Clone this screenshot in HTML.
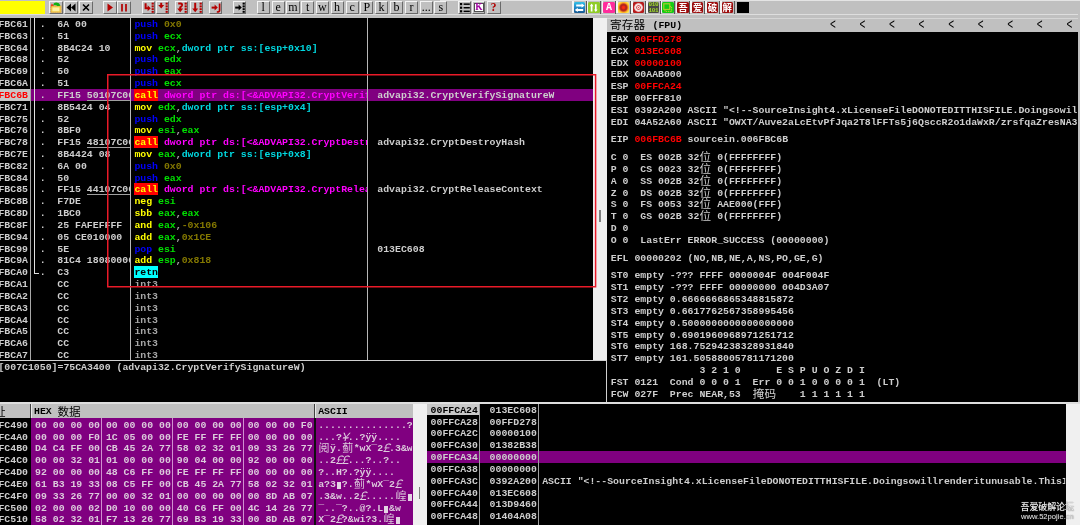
<!DOCTYPE html>
<html lang="zh"><head><meta charset="utf-8"><title>OllyDbg</title>
<style>
html,body{margin:0;padding:0;background:#c0c0c0;}
body{width:1080px;height:525px;position:relative;overflow:hidden;font-family:"Liberation Mono","Noto Sans CJK SC",monospace;}
.abs{position:absolute;}
.pane{position:absolute;background:#000;overflow:hidden;will-change:transform;}
.r{position:absolute;left:0;white-space:pre;height:12px;line-height:12px;font-size:9.853px;font-weight:bold;color:#cecece;}
.r span.c{position:absolute;top:0;height:12px;clip-path:inset(-3px 0 -3px 0);}
.r i{position:absolute;height:11.825px;display:block}
.cj{display:inline-block;width:11.824px;height:12px;line-height:9.5px;vertical-align:top;font-family:"Noto Sans CJK SC",sans-serif;font-weight:normal;font-size:11.6px;text-align:center;}
.hl{position:absolute;background:#800080;}
.vl{position:absolute;width:1px;background:#b8b8b8;}
.hz{position:absolute;height:1px;background:#c8c8c8;}
.b{color:#0000ff}.g{color:#00e000}.y{color:#ffff00}.o{color:#847800}.cy{color:#00d8e0}.m{color:#ff00ff}.gr{color:#a8a8a8}.rd{color:#ff0000}.w{color:#cecece}
.call{color:#ffff00}.retn{color:#000}
.u{border-bottom:1px solid #a0a0a0;display:inline-block;height:10.4px;line-height:12px;vertical-align:top}
.tb{position:absolute;top:1px;height:13px;width:13px;box-sizing:border-box;border:1px solid;border-color:#f4f4f4 #6a6a6a #6a6a6a #f4f4f4;background:#c0c0c0;text-align:center;font-family:"Liberation Serif",serif;font-size:12px;line-height:10.5px;color:#000;overflow:hidden;}
.ic{position:absolute;top:1.5px;height:11.6px;width:11.4px;overflow:hidden;border-radius:1.5px;}
</style></head><body>

<div class="abs" style="left:0;top:0;width:1080px;height:18px;will-change:transform">
<div class="abs" style="left:0;top:14.2px;width:1078px;height:1.1px;background:#dedede"></div>
<div class="abs" style="left:0;top:1px;width:44.5px;height:12.8px;background:#ffff00"></div>
<div class="abs" style="left:440px;top:0;width:640px;height:1px;background:#e4e4e4"></div>
<div class="tb" style="left:49.4px;width:13.4px"><svg width="12" height="11" viewBox="0 0 12 11" style="position:absolute;left:0;top:0"><rect x="0.8" y="3.8" width="10.4" height="6.8" fill="#f0c848" stroke="#d89030" stroke-width="0.8" stroke-dasharray="1 1"/><rect x="2.4" y="5.4" width="7" height="3.8" fill="#fff0a0"/><path d="M3.4 3.6 Q3 0.4 6.4 0.4 Q9.4 0.6 10.4 3.4 Q8 4.8 6.6 3.4 Q5 2.6 3.4 3.6Z" fill="#10b010"/><path d="M0.8 4.6 L1.6 1.6 L4 3.4 Z" fill="#f03818"/></svg></div>
<div class="tb" style="left:64.2px;width:13.4px"><svg width="12" height="11" viewBox="0 0 12 11" style="position:absolute;left:0;top:0"><path d="M6 1.5 L1.5 5.5 L6 9.5Z M10.5 1.5 L6 5.5 L10.5 9.5Z" fill="#000"/></svg></div>
<div class="tb" style="left:79.4px;width:13.4px"><svg width="12" height="11" viewBox="0 0 12 11" style="position:absolute;left:0;top:0"><path d="M3 2.5 L9 8.5 M9 2.5 L3 8.5" stroke="#000" stroke-width="1.6"/></svg></div>
<div class="tb" style="left:103.3px;width:13.4px"><svg width="12" height="11" viewBox="0 0 12 11" style="position:absolute;left:0;top:0"><path d="M3.5 1.5 L9 5.5 L3.5 9.5Z" fill="#b40000"/></svg></div>
<div class="tb" style="left:117.2px;width:13.4px"><svg width="12" height="11" viewBox="0 0 12 11" style="position:absolute;left:0;top:0"><path d="M4 2 V9.5 M8 2 V9.5" stroke="#b40000" stroke-width="1.7"/></svg></div>
<div class="tb" style="left:141.7px;width:13.4px"><svg width="12" height="11" viewBox="0 0 12 11" style="position:absolute;left:0;top:0"><path d="M2.6 1.2 V6.2 H5.5" stroke="#b40000" stroke-width="2" fill="none"/><path d="M4.6 3.2 L4.6 9.2 L7.8 6.2Z" fill="#b40000"/><g fill="#b40000"><rect x="8.6" y="0.6" width="2.2" height="2"/><rect x="8.6" y="3.4" width="2.2" height="2"/><rect x="8.6" y="6.2" width="2.2" height="2"/><rect x="8.6" y="9" width="2.2" height="1.8"/></g></svg></div>
<div class="tb" style="left:156.0px;width:13.4px"><svg width="12" height="11" viewBox="0 0 12 11" style="position:absolute;left:0;top:0"><path d="M4.2 0.8 V4" stroke="#b40000" stroke-width="2" fill="none"/><path d="M1.2 3 L7.2 3 L4.2 6.6Z" fill="#b40000"/><g fill="#b40000"><rect x="8.6" y="0.6" width="2.2" height="2"/><rect x="8.6" y="3.4" width="2.2" height="2"/><rect x="8.6" y="6.2" width="2.2" height="2"/><rect x="8.6" y="9" width="2.2" height="1.8"/></g></svg></div>
<div class="tb" style="left:175.0px;width:13.4px"><svg width="12" height="11" viewBox="0 0 12 11" style="position:absolute;left:0;top:0"><path d="M2.2 1.6 H4.6 Q6.2 1.6 6 3.2 Q5.6 4.6 4.2 5.4 V7.4" stroke="#b40000" stroke-width="2" fill="none"/><path d="M1.2 6.6 L7.2 6.6 L4.2 10.2Z" fill="#b40000"/><g fill="#b40000"><rect x="8.6" y="0.6" width="2.2" height="2"/><rect x="8.6" y="3.4" width="2.2" height="2"/><rect x="8.6" y="6.2" width="2.2" height="2"/><rect x="8.6" y="9" width="2.2" height="1.8"/></g></svg></div>
<div class="tb" style="left:190.0px;width:13.4px"><svg width="12" height="11" viewBox="0 0 12 11" style="position:absolute;left:0;top:0"><path d="M4.2 0.8 V7.4" stroke="#b40000" stroke-width="2" fill="none"/><path d="M1.2 6.6 L7.2 6.6 L4.2 10.2Z" fill="#b40000"/><g fill="#b40000"><rect x="8.6" y="0.6" width="2.2" height="2"/><rect x="8.6" y="3.4" width="2.2" height="2"/><rect x="8.6" y="6.2" width="2.2" height="2"/><rect x="8.6" y="9" width="2.2" height="1.8"/></g></svg></div>
<div class="tb" style="left:208.9px;width:13.4px"><svg width="12" height="11" viewBox="0 0 12 11" style="position:absolute;left:0;top:0"><path d="M1.6 5.6 H5.6" stroke="#b40000" stroke-width="2" fill="none"/><path d="M4.6 2.6 L4.6 8.6 L7.8 5.6Z" fill="#b40000"/><path d="M9.6 1.4 V8.4 Q9.6 10 6.8 10" stroke="#b40000" stroke-width="1.7" fill="none"/></svg></div>
<div class="tb" style="left:232.8px;width:13.4px"><svg width="12" height="11" viewBox="0 0 12 11" style="position:absolute;left:0;top:0"><path d="M1.2 5.6 H5.6" stroke="#000" stroke-width="2" fill="none"/><path d="M4.6 2.6 L4.6 8.6 L7.8 5.6Z" fill="#000"/><g fill="#000"><rect x="8.6" y="0.6" width="2.2" height="2"/><rect x="8.6" y="3.4" width="2.2" height="2"/><rect x="8.6" y="6.2" width="2.2" height="2"/><rect x="8.6" y="9" width="2.2" height="1.8"/></g></svg></div>
<div class="tb" style="left:256.7px;width:13.2px">l</div>
<div class="tb" style="left:271.6px;width:13.2px">e</div>
<div class="tb" style="left:286.4px;width:13.2px">m</div>
<div class="tb" style="left:301.0px;width:13.2px">t</div>
<div class="tb" style="left:315.7px;width:13.2px">w</div>
<div class="tb" style="left:330.5px;width:13.2px">h</div>
<div class="tb" style="left:345.6px;width:13.2px">c</div>
<div class="tb" style="left:360.3px;width:13.2px">P</div>
<div class="tb" style="left:375.0px;width:13.2px">k</div>
<div class="tb" style="left:390.0px;width:13.2px">b</div>
<div class="tb" style="left:404.8px;width:13.2px">r</div>
<div class="tb" style="left:419.6px;width:13.2px">...</div>
<div class="tb" style="left:434.3px;width:13.2px">s</div>
<div class="tb" style="left:458.0px;width:13.0px"><svg width="12" height="11" viewBox="0 0 12 11" style="position:absolute;left:0;top:0"><g fill="#000"><rect x="1" y="1" width="2.2" height="2.2"/><rect x="1" y="4.6" width="2.2" height="2.2"/><rect x="1" y="8.2" width="2.2" height="2.2"/><rect x="4.6" y="1.4" width="6.2" height="1.5"/><rect x="4.6" y="5" width="6.2" height="1.5"/><rect x="4.6" y="8.6" width="6.2" height="1.5"/></g></svg></div>
<div class="tb" style="left:472.2px;width:13px"><div style="position:absolute;left:0.4px;top:1.2px;width:10.6px;height:8.8px;box-sizing:border-box;border:1px solid #505050;background:#fff;font:bold 9.5px/6.4px 'Liberation Serif',serif;color:#a000a0;text-align:center">K</div></div>
<div class="tb" style="left:486.6px;width:14px;font-weight:bold;font-size:11.5px;line-height:11.5px;color:#b00000">?</div>
<div class="abs" style="left:572.0px;top:1.4px;width:1.6px;height:11.8px;background:#f4f4f4"></div>
<div class="ic" style="left:573.6px;background:linear-gradient(#30c0e8,#2088c8 50%,#185890)"><svg width="11.4" height="11.6" viewBox="0 0 11.4 11.6" style="position:absolute;left:0;top:0"><path d="M2.2 3.6 H8.6 M2.8 7.9 H9.2" stroke="#fff" stroke-width="2"/><path d="M7.6 1.4 L10.6 3.6 L7.6 5.8Z M3.8 5.7 L0.8 7.9 L3.8 10.1Z" fill="#fff"/></svg></div>
<div class="abs" style="left:585.6px;top:1.2px;width:1px;height:12.4px;background:#585858"></div>
<div class="abs" style="left:586.8px;top:1.4px;width:1.6px;height:11.8px;background:#f4f4f4"></div>
<div class="ic" style="left:588.4px;background:#90cc28"><svg width="11.4" height="11.6" viewBox="0 0 11.4 11.6" style="position:absolute;left:0;top:0"><path d="M3.6 2.8 V9.4 M7.8 2.2 V8.8" stroke="#fff" stroke-width="1.7"/><path d="M1.8 4.2 L3.6 1.6 L5.4 4.2Z M6 7.4 L7.8 10 L9.6 7.4Z" fill="#fff"/></svg></div>
<div class="abs" style="left:600.4px;top:1.2px;width:1px;height:12.4px;background:#585858"></div>
<div class="abs" style="left:601.6px;top:1.4px;width:1.6px;height:11.8px;background:#f4f4f4"></div>
<div class="ic" style="left:603.2px;background:#ff2c9c"><span style="position:absolute;left:0;width:11.4px;top:0;text-align:center;font:bold 10px/11.8px 'Liberation Mono',monospace;color:#fff">A</span></div>
<div class="abs" style="left:615.2px;top:1.2px;width:1px;height:12.4px;background:#585858"></div>
<div class="abs" style="left:616.4px;top:1.4px;width:1.6px;height:11.8px;background:#f4f4f4"></div>
<div class="ic" style="left:618.0px;background:radial-gradient(circle at 50% 50%,#ff3010 0,#f02810 18%,#a82020 34%,#c03820 46%,#f8a020 60%,#ffe040 78%,#fff080 100%)"></div>
<div class="abs" style="left:630.0px;top:1.2px;width:1px;height:12.4px;background:#585858"></div>
<div class="abs" style="left:631.2px;top:1.4px;width:1.6px;height:11.8px;background:#f4f4f4"></div>
<div class="ic" style="left:632.8px;background:radial-gradient(circle at 50% 50%,#e05050 0,#f8e0e0 14%,#d04040 24%,#f8e8e8 34%,#f0d0d0 50%,#c02020 60%,#a01010 100%)"></div>
<div class="abs" style="left:644.8px;top:1.2px;width:1px;height:12.4px;background:#585858"></div>
<div class="abs" style="left:646.0px;top:1.4px;width:1.6px;height:11.8px;background:#f4f4f4"></div>
<div class="ic" style="left:647.6px;background:#484844"><span style="position:absolute;left:0;width:11.4px;top:0.6px;text-align:center;font:bold 6px/5.4px 'Liberation Mono',monospace;color:#a0d828;letter-spacing:-0.4px">010<br>101</span></div>
<div class="abs" style="left:659.6px;top:1.2px;width:1px;height:12.4px;background:#585858"></div>
<div class="abs" style="left:660.8px;top:1.4px;width:1.6px;height:11.8px;background:#f4f4f4"></div>
<div class="ic" style="left:662.4px;background:#14cc14"><svg width="11.4" height="11.6" viewBox="0 0 11.4 11.6" style="position:absolute;left:0;top:0"><rect x="1.8" y="1.8" width="6" height="5.6" fill="none" stroke="#b8cc30" stroke-width="1.1"/><path d="M7.8 4.6 H9.6 V9.4 H3 V7.4" stroke="#b8cc30" stroke-width="1" fill="none" stroke-dasharray="1.4 0.8"/></svg></div>
<div class="abs" style="left:674.4px;top:1.2px;width:1px;height:12.4px;background:#585858"></div>
<div class="abs" style="left:675.6px;top:1.4px;width:1.6px;height:11.8px;background:#f4f4f4"></div>
<div class="ic" style="left:677.2px;background:#9c0c0c"><span style="position:absolute;left:0;width:11.4px;top:0;text-align:center;font:bold 9.4px/11.4px 'Noto Sans CJK SC',sans-serif;color:#fff">吾</span></div>
<div class="abs" style="left:689.2px;top:1.2px;width:1px;height:12.4px;background:#585858"></div>
<div class="abs" style="left:690.4px;top:1.4px;width:1.6px;height:11.8px;background:#f4f4f4"></div>
<div class="ic" style="left:692.0px;background:#9c0c0c"><span style="position:absolute;left:0;width:11.4px;top:0;text-align:center;font:bold 9.4px/11.4px 'Noto Sans CJK SC',sans-serif;color:#fff">爱</span></div>
<div class="abs" style="left:704.0px;top:1.2px;width:1px;height:12.4px;background:#585858"></div>
<div class="abs" style="left:705.2px;top:1.4px;width:1.6px;height:11.8px;background:#f4f4f4"></div>
<div class="ic" style="left:706.8px;background:#9c0c0c"><span style="position:absolute;left:0;width:11.4px;top:0;text-align:center;font:bold 9.4px/11.4px 'Noto Sans CJK SC',sans-serif;color:#fff">破</span></div>
<div class="abs" style="left:718.8px;top:1.2px;width:1px;height:12.4px;background:#585858"></div>
<div class="abs" style="left:720.0px;top:1.4px;width:1.6px;height:11.8px;background:#f4f4f4"></div>
<div class="ic" style="left:721.6px;background:#9c0c0c"><span style="position:absolute;left:0;width:11.4px;top:0;text-align:center;font:bold 9.4px/11.4px 'Noto Sans CJK SC',sans-serif;color:#fff">解</span></div>
<div class="abs" style="left:733.6px;top:1.2px;width:1px;height:12.4px;background:#585858"></div>
<div class="abs" style="left:736.8px;top:1.5px;width:12.2px;height:11.8px;background:#000"></div>
<div class="pane" style="left:0;top:18.0px;width:593px;height:342.0px">
<div class="hl" style="left:31px;top:70.75px;width:563px;height:11.92px"></div>
<div class="abs" style="left:0;top:70.75px;width:30px;height:11.92px;background:#c8c8c8"></div>
<div class="vl" style="left:30px;top:0;height:342.0px;background:#a8a8a8"></div>
<div class="vl" style="left:130px;top:0;height:342.0px"></div>
<div class="vl" style="left:367px;top:0;height:342.0px"></div>
<div class="vl" style="left:34px;top:0;height:255.1px;background:#e0e0e0"></div>
<div class="hz" style="left:34px;top:255.1px;width:5px;background:#e0e0e0"></div>
<div class="r" style="top:1px"><span class="c w" style="left:-1.60px">FBC61</span><span class="c" style="left:39.80px">.</span><span class="c" style="left:57.3px;width:72.7px">6A 00</span><span class="c" style="left:134.4px;width:232.6px"><span class="b">push </span><span class="o">0x0</span></span></div>
<div class="r" style="top:13px"><span class="c w" style="left:-1.60px">FBC63</span><span class="c" style="left:39.80px">.</span><span class="c" style="left:57.3px;width:72.7px">51</span><span class="c" style="left:134.4px;width:232.6px"><span class="b">push </span><span class="g">ecx</span></span></div>
<div class="r" style="top:25px"><span class="c w" style="left:-1.60px">FBC64</span><span class="c" style="left:39.80px">.</span><span class="c" style="left:57.3px;width:72.7px">8B4C24 10</span><span class="c" style="left:134.4px;width:232.6px"><span class="y">mov </span><span class="g">ecx</span><span class="gr">,</span><span class="cy">dword ptr ss:[esp+0x10]</span></span></div>
<div class="r" style="top:36px"><span class="c w" style="left:-1.60px">FBC68</span><span class="c" style="left:39.80px">.</span><span class="c" style="left:57.3px;width:72.7px">52</span><span class="c" style="left:134.4px;width:232.6px"><span class="b">push </span><span class="g">edx</span></span></div>
<div class="r" style="top:48px"><span class="c w" style="left:-1.60px">FBC69</span><span class="c" style="left:39.80px">.</span><span class="c" style="left:57.3px;width:72.7px">50</span><span class="c" style="left:134.4px;width:232.6px"><span class="b">push </span><span class="g">eax</span></span></div>
<div class="r" style="top:60px"><span class="c w" style="left:-1.60px">FBC6A</span><span class="c" style="left:39.80px">.</span><span class="c" style="left:57.3px;width:72.7px">51</span><span class="c" style="left:134.4px;width:232.6px"><span class="b">push </span><span class="g">ecx</span></span></div>
<div class="r" style="top:72px"><span class="c rd" style="left:-1.60px">FBC6B</span><span class="c" style="left:39.80px">.</span><span class="c" style="left:57.3px;width:72.7px">FF15 <span class="u">50107C00</span></span><i style="left:134px;top:-1.25px;width:23.65px;background:#ff0000"></i><span class="c" style="left:134.4px;width:232.6px"><span class="call">call</span><span class="m"> dword ptr ds:[&lt;&amp;ADVAPI32.CryptVerifySignatureW&gt;]</span></span><span class="c" style="left:377.3px">advapi32.CryptVerifySignatureW</span></div>
<div class="r" style="top:84px"><span class="c w" style="left:-1.60px">FBC71</span><span class="c" style="left:39.80px">.</span><span class="c" style="left:57.3px;width:72.7px">8B5424 04</span><span class="c" style="left:134.4px;width:232.6px"><span class="y">mov </span><span class="g">edx</span><span class="gr">,</span><span class="cy">dword ptr ss:[esp+0x4]</span></span></div>
<div class="r" style="top:96px"><span class="c w" style="left:-1.60px">FBC75</span><span class="c" style="left:39.80px">.</span><span class="c" style="left:57.3px;width:72.7px">52</span><span class="c" style="left:134.4px;width:232.6px"><span class="b">push </span><span class="g">edx</span></span></div>
<div class="r" style="top:107px"><span class="c w" style="left:-1.60px">FBC76</span><span class="c" style="left:39.80px">.</span><span class="c" style="left:57.3px;width:72.7px">8BF0</span><span class="c" style="left:134.4px;width:232.6px"><span class="y">mov </span><span class="g">esi</span><span class="gr">,</span><span class="g">eax</span></span></div>
<div class="r" style="top:119px"><span class="c w" style="left:-1.60px">FBC78</span><span class="c" style="left:39.80px">.</span><span class="c" style="left:57.3px;width:72.7px">FF15 <span class="u">48107C00</span></span><i style="left:134px;top:-0.95px;width:23.65px;background:#ff0000"></i><span class="c" style="left:134.4px;width:232.6px"><span class="call">call</span><span class="m"> dword ptr ds:[&lt;&amp;ADVAPI32.CryptDestroyHash&gt;]</span></span><span class="c" style="left:377.3px">advapi32.CryptDestroyHash</span></div>
<div class="r" style="top:131px"><span class="c w" style="left:-1.60px">FBC7E</span><span class="c" style="left:39.80px">.</span><span class="c" style="left:57.3px;width:72.7px">8B4424 08</span><span class="c" style="left:134.4px;width:232.6px"><span class="y">mov </span><span class="g">eax</span><span class="gr">,</span><span class="cy">dword ptr ss:[esp+0x8]</span></span></div>
<div class="r" style="top:143px"><span class="c w" style="left:-1.60px">FBC82</span><span class="c" style="left:39.80px">.</span><span class="c" style="left:57.3px;width:72.7px">6A 00</span><span class="c" style="left:134.4px;width:232.6px"><span class="b">push </span><span class="o">0x0</span></span></div>
<div class="r" style="top:155px"><span class="c w" style="left:-1.60px">FBC84</span><span class="c" style="left:39.80px">.</span><span class="c" style="left:57.3px;width:72.7px">50</span><span class="c" style="left:134.4px;width:232.6px"><span class="b">push </span><span class="g">eax</span></span></div>
<div class="r" style="top:166px"><span class="c w" style="left:-1.60px">FBC85</span><span class="c" style="left:39.80px">.</span><span class="c" style="left:57.3px;width:72.7px">FF15 <span class="u">44107C00</span></span><i style="left:134px;top:-0.65px;width:23.65px;background:#ff0000"></i><span class="c" style="left:134.4px;width:232.6px"><span class="call">call</span><span class="m"> dword ptr ds:[&lt;&amp;ADVAPI32.CryptReleaseContext&gt;]</span></span><span class="c" style="left:377.3px">advapi32.CryptReleaseContext</span></div>
<div class="r" style="top:178px"><span class="c w" style="left:-1.60px">FBC8B</span><span class="c" style="left:39.80px">.</span><span class="c" style="left:57.3px;width:72.7px">F7DE</span><span class="c" style="left:134.4px;width:232.6px"><span class="y">neg </span><span class="g">esi</span></span></div>
<div class="r" style="top:190px"><span class="c w" style="left:-1.60px">FBC8D</span><span class="c" style="left:39.80px">.</span><span class="c" style="left:57.3px;width:72.7px">1BC0</span><span class="c" style="left:134.4px;width:232.6px"><span class="y">sbb </span><span class="g">eax</span><span class="gr">,</span><span class="g">eax</span></span></div>
<div class="r" style="top:202px"><span class="c w" style="left:-1.60px">FBC8F</span><span class="c" style="left:39.80px">.</span><span class="c" style="left:57.3px;width:72.7px">25 FAFEFFFF</span><span class="c" style="left:134.4px;width:232.6px"><span class="y">and </span><span class="g">eax</span><span class="gr">,</span><span class="o">-0x106</span></span></div>
<div class="r" style="top:214px"><span class="c w" style="left:-1.60px">FBC94</span><span class="c" style="left:39.80px">.</span><span class="c" style="left:57.3px;width:72.7px">05 CE010000</span><span class="c" style="left:134.4px;width:232.6px"><span class="y">add </span><span class="g">eax</span><span class="gr">,</span><span class="o">0x1CE</span></span></div>
<div class="r" style="top:226px"><span class="c w" style="left:-1.60px">FBC99</span><span class="c" style="left:39.80px">.</span><span class="c" style="left:57.3px;width:72.7px">5E</span><span class="c" style="left:134.4px;width:232.6px"><span class="b">pop </span><span class="g">esi</span></span><span class="c" style="left:377.3px">013EC608</span></div>
<div class="r" style="top:237px"><span class="c w" style="left:-1.60px">FBC9A</span><span class="c" style="left:39.80px">.</span><span class="c" style="left:57.3px;width:72.7px">81C4 18080000</span><span class="c" style="left:134.4px;width:232.6px"><span class="y">add </span><span class="g">esp</span><span class="gr">,</span><span class="o">0x818</span></span></div>
<div class="r" style="top:249px"><span class="c w" style="left:-1.60px">FBCA0</span><span class="c" style="left:39.80px">.</span><span class="c" style="left:57.3px;width:72.7px">C3</span><i style="left:134px;top:-0.88px;width:23.65px;background:#00ffff"></i><span class="c" style="left:134.4px;width:232.6px"><span class="retn">retn</span></span></div>
<div class="r" style="top:261px"><span class="c w" style="left:-1.60px">FBCA1</span><span class="c" style="left:57.3px;width:72.7px">CC</span><span class="c" style="left:134.4px;width:232.6px"><span class="gr">int3</span></span></div>
<div class="r" style="top:273px"><span class="c w" style="left:-1.60px">FBCA2</span><span class="c" style="left:57.3px;width:72.7px">CC</span><span class="c" style="left:134.4px;width:232.6px"><span class="gr">int3</span></span></div>
<div class="r" style="top:285px"><span class="c w" style="left:-1.60px">FBCA3</span><span class="c" style="left:57.3px;width:72.7px">CC</span><span class="c" style="left:134.4px;width:232.6px"><span class="gr">int3</span></span></div>
<div class="r" style="top:297px"><span class="c w" style="left:-1.60px">FBCA4</span><span class="c" style="left:57.3px;width:72.7px">CC</span><span class="c" style="left:134.4px;width:232.6px"><span class="gr">int3</span></span></div>
<div class="r" style="top:308px"><span class="c w" style="left:-1.60px">FBCA5</span><span class="c" style="left:57.3px;width:72.7px">CC</span><span class="c" style="left:134.4px;width:232.6px"><span class="gr">int3</span></span></div>
<div class="r" style="top:320px"><span class="c w" style="left:-1.60px">FBCA6</span><span class="c" style="left:57.3px;width:72.7px">CC</span><span class="c" style="left:134.4px;width:232.6px"><span class="gr">int3</span></span></div>
<div class="r" style="top:332px"><span class="c w" style="left:-1.60px">FBCA7</span><span class="c" style="left:57.3px;width:72.7px">CC</span><span class="c" style="left:134.4px;width:232.6px"><span class="gr">int3</span></span></div>
</div>
<div class="abs" style="left:593px;top:18px;width:14px;height:342px;background:#f0f0f0"></div>
<div class="abs" style="left:599.4px;top:209.5px;width:1.6px;height:12px;background:#808080"></div>
<svg class="abs" style="left:0;top:0;will-change:transform;pointer-events:none" width="620" height="300" viewBox="0 0 620 300"><rect x="107.75" y="74.75" width="487.85" height="212" fill="none" stroke="#ea1a28" stroke-width="1.5"/></svg>
<div class="pane" style="left:0;top:360px;width:606.4px;height:43px">
<div class="hz" style="left:0;top:0;width:607px;background:#d0d0d0"></div>
<div class="r" style="top:2px"><span class="c" style="left:-1.6px">[007C1050]=75CA3400 (advapi32.CryptVerifySignatureW)</span></div>
</div>
<div class="vl" style="left:606.3px;top:360px;height:43px;background:#d0d0d0"></div>
<div class="pane" style="left:607.0px;top:18.0px;width:471px;height:385px">
<div class="abs" style="left:0;top:0;width:471px;height:13.7px;background:#c0c0c0"></div>
<div class="abs" style="left:0;top:0;width:471px;height:1px;background:#d6d6d6"></div>
<div class="r" style="top:2px;color:#000"><span class="c" style="left:3px;top:-1.6px;height:14px;font:normal 11.6px/12.5px 'Noto Sans CJK SC',sans-serif;letter-spacing:0.1px">寄存器</span><span class="c" style="left:45.5px">(FPU)</span><span class="c" style="left:222.90px;font-weight:normal;transform:translateY(1px) scaleY(1.55);transform-origin:50% 62%;overflow:visible">&lt;</span><span class="c" style="left:252.46px;font-weight:normal;transform:translateY(1px) scaleY(1.55);transform-origin:50% 62%;overflow:visible">&lt;</span><span class="c" style="left:282.02px;font-weight:normal;transform:translateY(1px) scaleY(1.55);transform-origin:50% 62%;overflow:visible">&lt;</span><span class="c" style="left:311.58px;font-weight:normal;transform:translateY(1px) scaleY(1.55);transform-origin:50% 62%;overflow:visible">&lt;</span><span class="c" style="left:341.14px;font-weight:normal;transform:translateY(1px) scaleY(1.55);transform-origin:50% 62%;overflow:visible">&lt;</span><span class="c" style="left:370.70px;font-weight:normal;transform:translateY(1px) scaleY(1.55);transform-origin:50% 62%;overflow:visible">&lt;</span><span class="c" style="left:400.26px;font-weight:normal;transform:translateY(1px) scaleY(1.55);transform-origin:50% 62%;overflow:visible">&lt;</span><span class="c" style="left:429.82px;font-weight:normal;transform:translateY(1px) scaleY(1.55);transform-origin:50% 62%;overflow:visible">&lt;</span><span class="c" style="left:459.38px;font-weight:normal;transform:translateY(1px) scaleY(1.55);transform-origin:50% 62%;overflow:visible">&lt;</span></div>
<div class="r" style="top:16px"><span class="c" style="left:3.8px;width:467px">EAX <span class="rd">00FFD278</span></span></div>
<div class="r" style="top:28px"><span class="c" style="left:3.8px;width:467px">ECX <span class="rd">013EC608</span></span></div>
<div class="r" style="top:40px"><span class="c" style="left:3.8px;width:467px">EDX <span class="rd">00000100</span></span></div>
<div class="r" style="top:51px"><span class="c" style="left:3.8px;width:467px">EBX 00AAB000</span></div>
<div class="r" style="top:63px"><span class="c" style="left:3.8px;width:467px">ESP <span class="rd">00FFCA24</span></span></div>
<div class="r" style="top:75px"><span class="c" style="left:3.8px;width:467px">EBP 00FFF810</span></div>
<div class="r" style="top:87px"><span class="c" style="left:3.8px;width:467px">ESI 0392A200 ASCII "&lt;!--SourceInsight4.xLicenseFileDONOTEDITTHISFILE.Doingsowillrenderitunusable.</span></div>
<div class="r" style="top:99px"><span class="c" style="left:3.8px;width:467px">EDI 04A52A60 ASCII "OWXT/Auve2aLcEtvPfJqa2T8lFFTs5j6QsccR2o1daWxR/zrsfqaZresNA3kL9</span></div>
<div class="r" style="top:116px"><span class="c" style="left:3.8px;width:467px">EIP <span class="rd">006FBC6B</span> sourcein.006FBC6B</span></div>
<div class="r" style="top:134px"><span class="c" style="left:3.8px;width:467px">C 0  ES 002B 32<span class="cj">位</span> 0(FFFFFFFF)</span></div>
<div class="r" style="top:146px"><span class="c" style="left:3.8px;width:467px">P 0  CS 0023 32<span class="cj">位</span> 0(FFFFFFFF)</span></div>
<div class="r" style="top:158px"><span class="c" style="left:3.8px;width:467px">A 0  SS 002B 32<span class="cj">位</span> 0(FFFFFFFF)</span></div>
<div class="r" style="top:170px"><span class="c" style="left:3.8px;width:467px">Z 0  DS 002B 32<span class="cj">位</span> 0(FFFFFFFF)</span></div>
<div class="r" style="top:181px"><span class="c" style="left:3.8px;width:467px">S 0  FS 0053 32<span class="cj">位</span> AAE000(FFF)</span></div>
<div class="r" style="top:193px"><span class="c" style="left:3.8px;width:467px">T 0  GS 002B 32<span class="cj">位</span> 0(FFFFFFFF)</span></div>
<div class="r" style="top:205px"><span class="c" style="left:3.8px;width:467px">D 0</span></div>
<div class="r" style="top:217px"><span class="c" style="left:3.8px;width:467px">O 0  LastErr ERROR_SUCCESS (00000000)</span></div>
<div class="r" style="top:235px"><span class="c" style="left:3.8px;width:467px">EFL 00000202 (NO,NB,NE,A,NS,PO,GE,G)</span></div>
<div class="r" style="top:252px"><span class="c" style="left:3.8px;width:467px">ST0 empty -??? FFFF 0000004F 004F004F</span></div>
<div class="r" style="top:264px"><span class="c" style="left:3.8px;width:467px">ST1 empty -??? FFFF 00000000 004D3A07</span></div>
<div class="r" style="top:276px"><span class="c" style="left:3.8px;width:467px">ST2 empty 0.6666666865348815872</span></div>
<div class="r" style="top:288px"><span class="c" style="left:3.8px;width:467px">ST3 empty 0.6617762567358995456</span></div>
<div class="r" style="top:300px"><span class="c" style="left:3.8px;width:467px">ST4 empty 0.5000000000000000000</span></div>
<div class="r" style="top:312px"><span class="c" style="left:3.8px;width:467px">ST5 empty 0.6901960968971251712</span></div>
<div class="r" style="top:323px"><span class="c" style="left:3.8px;width:467px">ST6 empty 168.75294238328931840</span></div>
<div class="r" style="top:335px"><span class="c" style="left:3.8px;width:467px">ST7 empty 161.50588005781171200</span></div>
<div class="r" style="top:347px"><span class="c" style="left:3.8px;width:467px">               3 2 1 0      E S P U O Z D I</span></div>
<div class="r" style="top:359px"><span class="c" style="left:3.8px;width:467px">FST 0121  Cond 0 0 0 1  Err 0 0 1 0 0 0 0 1  (LT)</span></div>
<div class="r" style="top:371px"><span class="c" style="left:3.8px;width:467px">FCW 027F  Prec NEAR,53  <span class="cj">掩</span><span class="cj">码</span>    1 1 1 1 1 1</span></div>
</div>
<div class="abs" style="left:1078px;top:16px;width:2px;height:387px;background:#c0c0c0"></div>
<div class="pane" style="left:0;top:403.0px;width:412.6px;height:122.0px">
<div class="abs" style="left:0;top:0;width:412.6px;height:15px;background:#c0c0c0"></div>
<div class="abs" style="left:31px;top:15px;width:381.6px;height:110px;background:#800080"></div>
<div class="vl" style="left:30px;top:0;height:15px;background:#404040"></div>
<div class="vl" style="left:314px;top:15px;width:2px;height:107px;background:#101010"></div>
<div class="vl" style="left:314px;top:0;height:15px;background:#404040"></div>
<div class="vl" style="left:315px;top:0;height:15px;background:#e8e8e8"></div>
<div class="vl" style="left:31px;top:0;height:15px;background:#e8e8e8"></div>
<div class="vl" style="left:101px;top:15px;height:110px;background:#d090d0"></div>
<div class="vl" style="left:172px;top:15px;height:110px;background:#d090d0"></div>
<div class="vl" style="left:243px;top:15px;height:110px;background:#d090d0"></div>
<div class="r" style="top:3px;color:#000"><span class="c" style="left:-6px;top:-1.4px;height:14px;font:normal 11.6px/12.5px 'Noto Sans CJK SC',sans-serif">址</span><span class="c" style="left:34px">HEX </span><span class="c" style="left:57.5px;top:-1.4px;height:14px;font:normal 11.6px/12.5px 'Noto Sans CJK SC',sans-serif">数据</span><span class="c" style="left:318.2px">ASCII</span></div>
<div class="r" style="top:17px;color:#dccadc"><span class="c w" style="left:-1.6px">FC490</span><span class="c" style="left:35px">00 00 00 00 00 00 00 00 00 00 00 00 00 00 00 F0</span><span class="c" style="left:318.2px;width:94px">...............?</span></div>
<div class="r" style="top:29px;color:#dccadc"><span class="c w" style="left:-1.6px">FC4A0</span><span class="c" style="left:35px">00 00 00 F0 1C 05 00 00 FE FF FF FF 00 00 00 00</span><span class="c" style="left:318.2px;width:94px">...?<span class="cj" style="width:5.912px;font-size:11.5px;overflow:visible;text-align:left;text-indent:-2.6px;font-style:italic">￥</span>..?ÿÿ....</span></div>
<div class="r" style="top:40px;color:#dccadc"><span class="c w" style="left:-1.6px">FC4B0</span><span class="c" style="left:35px">D4 C4 FF 00 CB 45 2A 77 58 02 32 01 09 33 26 77</span><span class="c" style="left:318.2px;width:94px"><span class="cj" style="font-size:11px">阅</span>ÿ.<span class="cj" style="font-size:11px">蓟</span>*wX¯2<span class="cj" style="width:5.912px;font-size:11.5px;overflow:visible;text-align:left;text-indent:-2.6px;font-style:italic">￡</span>.3&amp;w</span></div>
<div class="r" style="top:52px;color:#dccadc"><span class="c w" style="left:-1.6px">FC4C0</span><span class="c" style="left:35px">00 00 32 01 01 00 00 00 90 04 00 00 92 00 00 00</span><span class="c" style="left:318.2px;width:94px">..2<span class="cj" style="width:5.912px;font-size:11.5px;overflow:visible;text-align:left;text-indent:-2.6px;font-style:italic">￡</span><span class="cj" style="width:5.912px;font-size:11.5px;overflow:visible;text-align:left;text-indent:-2.6px;font-style:italic">￡</span>...?..?..</span></div>
<div class="r" style="top:64px;color:#dccadc"><span class="c w" style="left:-1.6px">FC4D0</span><span class="c" style="left:35px">92 00 00 00 48 C6 FF 00 FE FF FF FF 00 00 00 00</span><span class="c" style="left:318.2px;width:94px">?..H?.?ÿÿ....</span></div>
<div class="r" style="top:76px;color:#dccadc"><span class="c w" style="left:-1.6px">FC4E0</span><span class="c" style="left:35px">61 B3 19 33 08 C5 FF 00 CB 45 2A 77 58 02 32 01</span><span class="c" style="left:318.2px;width:94px">a?3<span style="display:inline-block;width:5.912px;height:12px;vertical-align:top;position:relative"><span style="position:absolute;left:1px;top:3px;width:4px;height:7px;background:#e4d4e4"></span></span>?.<span class="cj" style="font-size:11px">蓟</span>*wX¯2<span class="cj" style="width:5.912px;font-size:11.5px;overflow:visible;text-align:left;text-indent:-2.6px;font-style:italic">￡</span></span></div>
<div class="r" style="top:88px;color:#dccadc"><span class="c w" style="left:-1.6px">FC4F0</span><span class="c" style="left:35px">09 33 26 77 00 00 32 01 00 00 00 00 00 8D AB 07</span><span class="c" style="left:318.2px;width:94px">.3&amp;w..2<span class="cj" style="width:5.912px;font-size:11.5px;overflow:visible;text-align:left;text-indent:-2.6px;font-style:italic">￡</span>.....<span class="cj" style="font-size:11px">崲</span><span style="display:inline-block;width:5.912px;height:12px;vertical-align:top;position:relative"><span style="position:absolute;left:1px;top:3px;width:4px;height:7px;background:#e4d4e4"></span></span></span></div>
<div class="r" style="top:100px;color:#dccadc"><span class="c w" style="left:-1.6px">FC500</span><span class="c" style="left:35px">02 00 00 02 D0 10 00 00 40 C6 FF 00 4C 14 26 77</span><span class="c" style="left:318.2px;width:94px">¯..¯?..@?.L<span style="display:inline-block;width:5.912px;height:12px;vertical-align:top;position:relative"><span style="position:absolute;left:1px;top:3px;width:4px;height:7px;background:#e4d4e4"></span></span>&amp;w</span></div>
<div class="r" style="top:111px;color:#dccadc"><span class="c w" style="left:-1.6px">FC510</span><span class="c" style="left:35px">58 02 32 01 F7 13 26 77 69 B3 19 33 00 8D AB 07</span><span class="c" style="left:318.2px;width:94px">X¯2<span class="cj" style="width:5.912px;font-size:11.5px;overflow:visible;text-align:left;text-indent:-2.6px;font-style:italic">￡</span>?&amp;wi?3.<span class="cj" style="font-size:11px">崲</span><span style="display:inline-block;width:5.912px;height:12px;vertical-align:top;position:relative"><span style="position:absolute;left:1px;top:3px;width:4px;height:7px;background:#e4d4e4"></span></span></span></div>
</div>
<div class="abs" style="left:412.6px;top:403px;width:14.4px;height:122px;background:#f0f0f0"></div>
<div class="abs" style="left:418.8px;top:486.8px;width:1.4px;height:12px;background:#808080"></div>
<div class="pane" style="left:427px;top:403.0px;width:639px;height:122.0px">
<div class="abs" style="left:0;top:0.45px;width:52px;height:12.02px;background:#c8c8c8"></div>
<div class="hl" style="left:0;top:47.95px;width:639px;height:11.82px"></div>
<div class="vl" style="left:52.3px;top:0;height:122px;background:#a0a0a0"></div>
<div class="vl" style="left:111.3px;top:0;height:122px;background:#a0a0a0"></div>
<div class="r" style="top:2px"><span class="c" style="left:3.6px;color:#000">00FFCA24</span><span class="c" style="left:62.6px">013EC608</span></div>
<div class="r" style="top:14px"><span class="c" style="left:3.6px;">00FFCA28</span><span class="c" style="left:62.6px">00FFD278</span></div>
<div class="r" style="top:25px"><span class="c" style="left:3.6px;">00FFCA2C</span><span class="c" style="left:62.6px">00000100</span></div>
<div class="r" style="top:37px"><span class="c" style="left:3.6px;">00FFCA30</span><span class="c" style="left:62.6px">01382B38</span></div>
<div class="r" style="top:49px"><span class="c" style="left:3.6px;">00FFCA34</span><span class="c" style="left:62.6px">00000000</span></div>
<div class="r" style="top:61px"><span class="c" style="left:3.6px;">00FFCA38</span><span class="c" style="left:62.6px">00000000</span></div>
<div class="r" style="top:73px"><span class="c" style="left:3.6px;">00FFCA3C</span><span class="c" style="left:62.6px">0392A200</span><span class="c" style="left:115.2px;width:523px">ASCII "&lt;!--SourceInsight4.xLicenseFileDONOTEDITTHISFILE.Doingsowillrenderitunusable.ThisI</span></div>
<div class="r" style="top:85px"><span class="c" style="left:3.6px;">00FFCA40</span><span class="c" style="left:62.6px">013EC608</span></div>
<div class="r" style="top:96px"><span class="c" style="left:3.6px;">00FFCA44</span><span class="c" style="left:62.6px">013D9460</span></div>
<div class="r" style="top:108px"><span class="c" style="left:3.6px;">00FFCA48</span><span class="c" style="left:62.6px">01404A08</span></div>
<div class="r" style="top:120px"><span class="c" style="left:3.6px;">00FFCA4C</span><span class="c" style="left:62.6px">01382B38</span></div>
</div>
<div class="abs" style="left:1066px;top:403px;width:14px;height:122px;background:#f0f0f0"></div>
<div class="abs" style="left:0;top:402.3px;width:1080px;height:1.6px;background:#dedede;will-change:transform"></div>
<div class="abs" style="left:1020.5px;top:500.5px;width:56px;font:500 9px/11px 'Noto Sans CJK SC',sans-serif;color:#e8e8e8;white-space:nowrap;letter-spacing:-0.1px;text-shadow:0 0 1px #404040">吾爱破解论坛</div>
<div class="abs" style="left:1021px;top:511.5px;width:56px;font:normal 7.6px/10px 'Liberation Sans',sans-serif;color:#e0e0e0;white-space:nowrap;text-shadow:0 0 1px #404040">www.52pojie.cn</div>
</body></html>
